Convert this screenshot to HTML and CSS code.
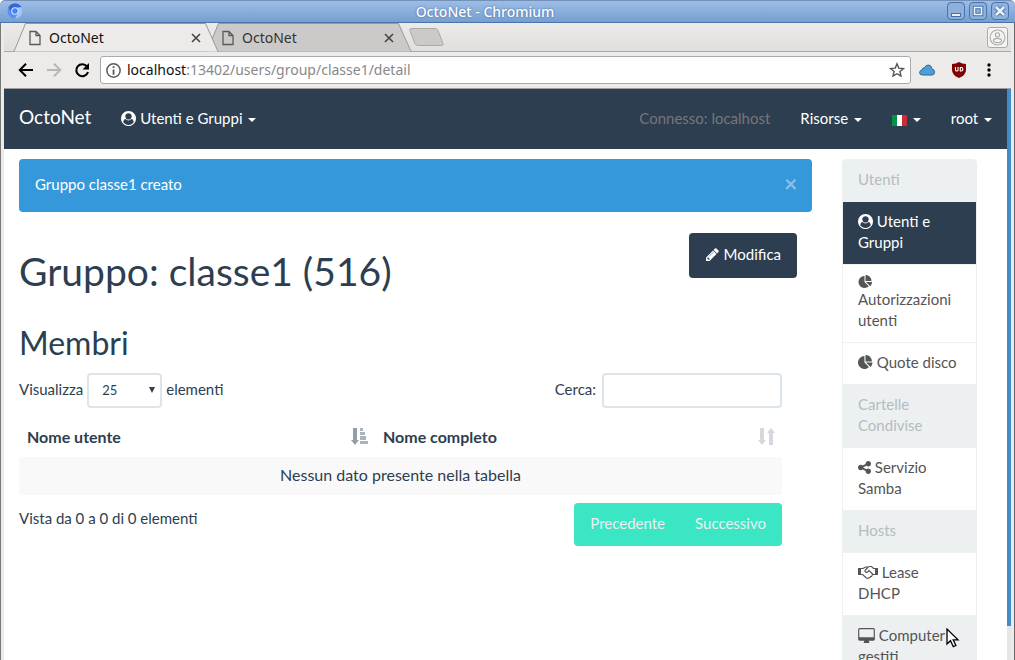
FILE: index.html
```
<!DOCTYPE html>
<html lang="it">
<head>
    <meta charset="UTF-8">
    <meta name="viewport" content="width=device-width, initial-scale=1.0">
    <title>OctoNet</title>
    <link rel="stylesheet" href="styles.css">
</head>
<body>
    <!-- Simboli condivisi -->
    <svg class="symbols" aria-hidden="true">
        <symbol id="user-circle" viewBox="0 0 1792 1792">
            <path d="M1523 1339q-22-155-87.500-257.500t-184.500-118.500q-67 74-159.500 115.500t-195.500 41.500-195.500-41.500-159.500-115.500q-119 16-184.500 118.500t-87.500 257.500q106 150 271 237.500t356 87.500 356-87.500 271-237.500zm-243-699q0-159-112.500-271.500t-271.500-112.500-271.500 112.500-112.500 271.500 112.500 271.500 271.500 112.500 271.500-112.500 112.500-271.500zm512 256q0 182-71 347.500t-190.500 286-285.500 191.500-349 71q-182 0-348-71t-286-191-191-286-71-348 71-348 191-286 286-191 348-71 348 71 286 191 191 286 71 348z"/>
        </symbol>
        <symbol id="pie-chart" viewBox="0 0 1792 1792">
            <path d="M768 890l546 546q-106 108-247.500 168t-298.500 60q-209 0-385.500-103t-279.500-279.500-103-385.500 103-385.500 279.500-279.500 385.500-103v762zm187 6h773q0 157-60 298.500t-168 247.500zm709-128h-768v-768q209 0 385.500 103t279.500 279.500 103 385.500z"/>
        </symbol>
        <symbol id="file" viewBox="0 0 12 16">
            <path d="M1 1.500h6l4 4v9H1zM7 1.500v4h4" fill="none" stroke="#5a5a5a" stroke-width="1.300"/>
        </symbol>
        <symbol id="cross" viewBox="0 0 10 10">
            <path d="M1 1l8 8M9 1L1 9" stroke="#444" stroke-width="1.600"/>
        </symbol>
        <symbol id="tab-shape" viewBox="0 0 206 29">
            <path d="M0 28.500h1L12.500.5h180L205 28.500h1"/>
        </symbol>
    </svg>

    <div class="window">
        <header class="titlebar">
            <svg class="app-icon" viewBox="0 0 16 16">
                <circle cx="8" cy="8" r="7.500" fill="#5b8ff0"/>
                <path d="M1.500 4.300A7.500 7.500 0 0 1 14.500 4.300L8 4.500 4.700 10z" fill="#3367d6"/>
                <path d="M14.500 4.300A7.500 7.500 0 0 1 8 15.500L11.200 9.800 11 4.400z" fill="#a5c3fb"/>
                <circle cx="8" cy="8" r="3.800" fill="#dbe7ff"/>
                <circle cx="8" cy="8" r="2.700" fill="#4483f3"/>
            </svg>
            <span class="window-title">OctoNet - Chromium</span>
            <div class="window-buttons">
                <button aria-label="Riduci"><svg viewBox="0 0 16 16"><rect x="3.500" y="10.500" width="9" height="3" fill="#e9f1fa" stroke="#4671a5"/></svg></button>
                <button aria-label="Ingrandisci"><svg viewBox="0 0 16 16"><path d="M4.500 4.500h7v7h-7z" fill="none" stroke="#4671a5" stroke-width="3.500"/><path d="M4.500 4.500h7v7h-7z" fill="none" stroke="#e9f1fa" stroke-width="1.600"/></svg></button>
                <button aria-label="Chiudi"><svg viewBox="0 0 16 16"><path d="M4 4l8 8M12 4l-8 8" stroke="#4671a5" stroke-width="4.500"/><path d="M4 4l8 8M12 4l-8 8" stroke="#e9f1fa" stroke-width="2.500"/></svg></button>
            </div>
        </header>

        <div class="frame">
            <div class="tabstrip">
                <div class="tab active">
                    <svg class="tab-bg"><use href="#tab-shape"/></svg>
                    <svg class="tab-file"><use href="#file"/></svg>
                    <span>OctoNet</span>
                    <button class="tab-close" aria-label="Chiudi scheda"><svg><use href="#cross"/></svg></button>
                </div>
                <div class="tab">
                    <svg class="tab-bg"><use href="#tab-shape"/></svg>
                    <svg class="tab-file"><use href="#file"/></svg>
                    <span>OctoNet</span>
                    <button class="tab-close" aria-label="Chiudi scheda"><svg><use href="#cross"/></svg></button>
                </div>
                <button class="new-tab" aria-label="Nuova scheda">
                    <svg viewBox="0 0 35 18"><path d="M2.500.5H26q2 0 3 2l5 13q.5 2-1.500 2H9q-2 0-3-2L.8 2.500Q.3.5 2.500.5z" fill="#cccac8" stroke="#aaa8a5"/></svg>
                </button>
                <button class="profile" aria-label="Profilo">
                    <svg viewBox="0 0 16 16" fill="none" stroke="#aaa"><circle cx="8" cy="8" r="7"/><circle cx="8" cy="5.500" r="2"/><ellipse cx="8" cy="10.800" rx="3.800" ry="2"/></svg>
                </button>
            </div>

            <div class="toolbar">
                <button aria-label="Indietro"><svg viewBox="0 0 16 16" fill="none" stroke="#000" stroke-width="2"><path d="M15 8H2M8 1.800L1.800 8 8 14.200"/></svg></button>
                <button aria-label="Avanti"><svg viewBox="0 0 16 16" fill="none" stroke="#b8b7b5" stroke-width="2"><path d="M1 8h13M8 1.800L14.200 8 8 14.200"/></svg></button>
                <button aria-label="Ricarica"><svg viewBox="0 0 16 16"><path d="M13 4.500A6 6 0 1 0 14 10" fill="none" stroke="#000" stroke-width="2.100"/><path d="M15 1v6.500H8.500z"/></svg></button>
                <div class="omnibox">
                    <svg class="info" viewBox="0 0 14 14"><circle cx="7" cy="7" r="6.200" fill="none" stroke="#5a5a5a" stroke-width="1.400"/><path d="M6.200 3h1.700v1.700H6.200zM6.200 6h1.700v5H6.200z" fill="#5a5a5a"/></svg>
                    <div class="url" role="textbox" aria-label="Indirizzo" contenteditable="true" spellcheck="false"><b>localhost</b>:13402/users/group/classe1/detail</div>
                    <svg class="star" viewBox="0 0 16 16"><path d="M8 1.800l1.800 4.300 4.700.4-3.600 3 1.100 4.600L8 11.700l-4 2.400 1.100-4.600-3.600-3 4.700-.4z" fill="none" stroke="#555" stroke-width="1.400"/></svg>
                </div>
                <button class="ext" aria-label="Cloud"><svg viewBox="0 0 16 16"><path d="M3.500 13Q.6 13 .6 10.500.6 8.500 3 8q.3-2.300 2.500-2.300Q6.800 3 9.300 3q3 0 3.500 3.600 2.700.8 2.700 3.500Q15.500 13 13 13z" fill="#4a9fdc" stroke="#3c6380"/></svg></button>
                <button class="ext" aria-label="uBlock">
                    <svg viewBox="0 0 16 16"><path d="M8 0q3 2 7 2v6q0 5-7 8-7-3-7-8V2q4 0 7-2z" fill="#800000"/><path d="M4.500 5v2.700q0 1.300 1.300 1.300t1.300-1.300V5M9.300 5.500h.9q1.700 0 1.700 1.700T10.200 9h-.9z" fill="none" stroke="#fff" stroke-width="1.100"/></svg>
                </button>
                <button class="menu" aria-label="Menu"><svg viewBox="0 0 4 16"><circle cx="2" cy="3" r="1.700"/><circle cx="2" cy="8" r="1.700"/><circle cx="2" cy="13" r="1.700"/></svg></button>
            </div>

            <div class="viewport">
                <div class="page">
                    <nav class="navbar">
                        <a class="brand" href="#">OctoNet</a>
                        <a href="#"><svg class="icon"><use href="#user-circle"/></svg> Utenti e Gruppi <i class="caret"></i></a>
                        <span class="connected">Connesso: localhost</span>
                        <a href="#">Risorse <i class="caret"></i></a>
                        <a href="#" aria-label="Lingua"><i class="flag"></i> <i class="caret"></i></a>
                        <a href="#">root <i class="caret"></i></a>
                    </nav>

                    <div class="container">
                        <main>
                            <div class="alert">
                                <span>Gruppo classe1 creato</span>
                                <button aria-label="Chiudi">×</button>
                            </div>
                            <div class="page-header">
                                <h1>Gruppo: classe1 (516)</h1>
                                <button class="btn">
                                    <svg class="pencil" viewBox="0 0 1792 1792"><path d="M491 1536l91-91-235-235-91 91v107h128v128h107zm523-928q0-22-22-22-10 0-17 7l-542 542q-7 7-7 17 0 22 22 22 10 0 17-7l542-542q7-7 7-17zm-54-192l416 416-832 832h-416v-416zm683 96q0 53-37 90l-166 166-416-416 166-165q36-38 90-38 53 0 91 38l235 234q37 39 37 91z"/></svg>
                                    Modifica
                                </button>
                            </div>

                            <section class="members">
                                <h2>Membri</h2>
                                <div class="controls">
                                    <label class="length"><span>Visualizza</span>
                                        <span class="select-box"><select><option>10</option><option selected>25</option><option>50</option></select></span>
                                        <span>elementi</span>
                                    </label>
                                    <label class="search"><span>Cerca:</span> <input type="search"></label>
                                </div>
                                <table>
                                    <thead>
                                        <tr>
                                            <th>
                                                <div>Nome utente
                                                    <svg class="sort" viewBox="0 0 17 17"><path d="M2 0h4v12h2l-4 5-4-5h2z" opacity=".5"/><path d="M9 0h3v3H9zM9 4h5v3H9zM9 8h6v4H9zM9 13h8v3H9z" opacity=".4"/></svg>
                                                </div>
                                            </th>
                                            <th>
                                                <div>Nome completo
                                                    <svg class="sort" viewBox="0 0 17 17"><path d="M2 0h4v12h2l-4 5-4-5h2zM11 17h4V5h2l-4-5-4 5h2z" opacity=".2"/></svg>
                                                </div>
                                            </th>
                                        </tr>
                                    </thead>
                                    <tbody>
                                        <tr><td colspan="2">Nessun dato presente nella tabella</td></tr>
                                    </tbody>
                                </table>
                                <div class="table-footer">
                                    <span>Vista da 0 a 0 di 0 elementi</span>
                                    <div class="pagination">
                                        <a href="#">Precedente</a>
                                        <a href="#">Successivo</a>
                                    </div>
                                </div>
                            </section>
                        </main>

                        <aside class="sidebar">
                            <div class="heading">Utenti</div>
                            <a class="active" href="#"><svg class="icon"><use href="#user-circle"/></svg> Utenti e Gruppi</a>
                            <a href="#"><svg class="icon stacked"><use href="#pie-chart"/></svg>Autorizzazioni utenti</a>
                            <a href="#"><svg class="icon"><use href="#pie-chart"/></svg> Quote disco</a>
                            <div class="heading">Cartelle Condivise</div>
                            <a href="#"><svg class="icon share" viewBox="128 128 1536 1536"><path d="M1344 1024q133 0 226.500 93.500t93.500 226.500-93.500 226.500-226.500 93.500-226.500-93.500-93.500-226.500q0-12 2-34l-360-180q-92 86-218 86-133 0-226.500-93.500t-93.500-226.500 93.500-226.500 226.500-93.500q126 0 218 86l360-180q-2-22-2-34 0-133 93.500-226.500t226.500-93.500 226.500 93.500 93.500 226.500-93.500 226.500-226.500 93.500q-126 0-218-86l-360 180q2 22 2 34t-2 34l360 180q92-86 218-86z"/></svg> Servizio Samba</a>
                            <div class="heading">Hosts</div>
                            <a href="#"><svg class="icon wide" viewBox="0 0 20 15">
                                <path d="M0 3h3v7H0zM17 3h3v7h-3z"/>
                                <path d="M3 3.500h2L7.500 2H10l1.500-.5h2l2 2H17M3 9.500h1.500l4 3.500q1.200.8 2-.2 1.600.3 2-1.100 1.500 0 1.700-1.700l.8-.5h2M10.200 2L7 5.500q0 2 1.600 1.800 1.600-.3 2.400-1.800l4 4" fill="none" stroke="#555" stroke-width="1.200"/>
                            </svg> Lease DHCP</a>
                            <a class="hover" href="#"><svg class="icon desktop" viewBox="0 0 1856 1664"><path d="M1728 992v-832q0-13-9.500-22.500t-22.500-9.500h-1536q-13 0-22.500 9.500t-9.500 22.500v832q0 13 9.500 22.500t22.500 9.500h1536q13 0 22.500-9.500t9.500-22.500zm128-832v1088q0 66-47 113t-113 47h-512q0 37 16 77.500t32 71 16 43.500q0 26-19 45t-45 19h-512q-26 0-45-19t-19-45q0-14 16-44t32-70 16-78h-512q-66 0-113-47t-47-113v-1088q0-66 47-113t113-47h1536q66 0 113 47t47 113z"/></svg> Computer gestiti</a>
                        </aside>
                    </div>
                </div>
                <div class="scrollbar"><div class="thumb"></div></div>
            </div>
        </div>
    </div>

    <svg class="pointer" viewBox="0 0 14 20"><path d="M1 1v15l3.500-3.300 2.800 6 2.600-1.200-2.700-5.700H12z" fill="#fff" stroke="#000" stroke-width="1.300"/></svg>
</body>
</html>
```
FILE: styles.css
```
* {
    box-sizing: border-box;
}
body {
    margin: 0;
    font-family: Lato, sans-serif;
    font-size: 15px;
    line-height: 21px;
    color: #2c3e50;
    background-color: #fff;
}
button {
    font: inherit;
    border: none;
    padding: 0;
    background: none;
    cursor: pointer;
}
a {
    text-decoration: none;
}
svg {
    display: block;
}
.symbols {
    position: absolute;
    width: 0;
    height: 0;
}

/* Finestra */
.window {
    display: flex;
    flex-direction: column;
    height: 100vh;
    overflow: hidden;
}
.titlebar {
    display: flex;
    align-items: center;
    flex: none;
    height: 23px;
    padding: 0 6px 1px 7px;
    background: linear-gradient(#9dbde6, #769fd0);
    border-top: 1px solid #7391b8;
    border-bottom: 1px solid #4a73ab;
    border-radius: 5px 5px 0 0;
}
.app-icon {
    width: 16px;
    height: 16px;
}
.window-title {
    flex: 1;
    text-align: center;
    font-family: "Noto Sans", sans-serif;
    font-size: 14px;
    font-weight: 500;
    color: #fff;
    text-shadow: 0 0 2px #36609a;
}
.window-buttons {
    display: flex;
    gap: 4px;
}
.window-buttons button {
    width: 18px;
    height: 18px;
    border: 1px solid #4a73ab;
    border-radius: 4px;
    background-color: #8db0dd;
}
.frame {
    display: flex;
    flex-direction: column;
    flex: 1;
    min-height: 0;
    border-left: 1px solid #777;
    border-right: 1px solid #666;
    padding: 0 3px;
    background-color: #edebea;
    font-family: "Noto Sans", sans-serif;
}

/* Schede */
.tabstrip {
    display: flex;
    flex: none;
    height: 29px;
    padding-left: 9px;
    background: linear-gradient(#edebea, #e0dfdd);
    border-bottom: 1px solid #aaa8a6;
}
.tab {
    position: relative;
    display: flex;
    align-items: center;
    isolation: isolate;
    width: 206px;
    height: 29px;
    margin-right: -13px;
    padding: 0 18px 0 16px;
    font-size: 14px;
    color: #333;
}
.tab.active {
    z-index: 1;
    color: #111;
}
.tab-bg {
    position: absolute;
    left: 0;
    top: 0;
    z-index: -1;
    width: 206px;
    height: 29px;
    fill: #cccac8;
    stroke: #999;
}
.active .tab-bg {
    fill: #edebea;
}
.tab-file {
    width: 12px;
    height: 16px;
}
.tab span {
    flex: 1;
    margin-left: 8px;
}
.tab-close svg {
    width: 10px;
    height: 10px;
}
.new-tab {
    margin-left: 10px;
}
.new-tab svg {
    width: 35px;
    height: 18px;
}
.profile {
    width: 21px;
    height: 21px;
    margin: 4px 3px 0 auto;
    padding: 1px;
    border: 1px solid #aaa;
    border-radius: 3px;
    background-color: #f5f4f3;
}

/* Barra degli strumenti */
.toolbar {
    display: flex;
    align-items: center;
    flex: none;
    height: 37px;
    padding: 0 20px 0 14px;
    border-bottom: 1px solid #a09e9c;
}
.toolbar button svg {
    width: 16px;
    height: 16px;
}
.toolbar > button {
    margin-right: 12px;
}
.omnibox {
    display: flex;
    align-items: center;
    flex: 1;
    height: 28px;
    margin-right: 8px;
    margin-left: -2px;
    padding: 0 5px;
    background-color: #fff;
    border: 1px solid #aaa;
    border-radius: 3px;
}
.info {
    width: 15px;
    height: 15px;
}
.url {
    flex: 1;
    margin-left: 6px;
    padding-bottom: 2px;
    font-size: 14px;
    color: #888;
    outline: none;
}
.url b {
    font-weight: normal;
    color: #111;
}
.star {
    width: 16px;
    height: 16px;
}
.toolbar .ext {
    margin-right: 16px;
}
.toolbar .menu {
    width: 4px;
    margin: 0 0 0 4px;
}
.toolbar .menu svg {
    width: 4px;
}

/* Pagina */
.viewport {
    display: flex;
    flex: 1;
    min-height: 0;
    font-family: Lato, sans-serif;
    background-color: #fff;
}
.page {
    flex: 1;
    min-width: 0;
    overflow: hidden;
}
.scrollbar {
    width: 4px;
    background-color: #e6e6e6;
}
.thumb {
    height: 94%;
    background-color: #428bca;
}
.navbar {
    display: flex;
    align-items: center;
    height: 60px;
    padding-bottom: 2px;
    background-color: #2c3e50;
}
.navbar a, .connected {
    padding: 0 15px;
    color: #fff;
    white-space: nowrap;
}
.navbar .brand {
    padding-bottom: 4px;
    font-size: 19px;
}
.navbar .connected {
    margin-left: auto;
    color: #777;
}
.icon {
    display: inline-block;
    width: 15px;
    height: 15px;
    vertical-align: -2px;
    fill: currentColor;
}
.caret {
    display: inline-block;
    margin-left: 2px;
    vertical-align: middle;
    border-top: 4px solid;
    border-left: 4px solid transparent;
    border-right: 4px solid transparent;
}
.flag {
    display: inline-block;
    width: 15px;
    height: 11px;
    vertical-align: -2px;
    background: linear-gradient(90deg, #009246 33%, #fff 33%, #fff 67%, #ce2b37 67%);
}
.container {
    display: grid;
    grid-template-columns: 1fr 135px;
    align-items: start;
    gap: 30px;
    padding: 10px 30px 0 15px;
}
.alert {
    display: flex;
    justify-content: space-between;
    align-items: flex-start;
    padding: 15px 15px 17px 16px;
    margin-bottom: 21px;
    border-radius: 4px;
    color: #fff;
    background-color: #3498db;
}
.alert button {
    width: 13px;
    font-size: 23px;
    font-weight: bold;
    line-height: 18px;
    color: #fff;
    opacity: 0.4;
}
.page-header {
    display: flex;
    justify-content: space-between;
    align-items: flex-start;
    padding-right: 15px;
}
h1, h2 {
    margin: 0;
    font-weight: normal;
}
h1 {
    margin: 17px 0 31px;
    font-size: 39px;
    line-height: 43px;
}
h2 {
    margin-bottom: 12px;
    font-size: 32px;
    line-height: 37px;
}
.btn {
    display: flex;
    align-items: center;
    gap: 4px;
    height: 45px;
    padding: 0 16px 2px;
    border-radius: 4px;
    color: #fff;
    background-color: #2c3e50;
}
.pencil {
    width: 15px;
    height: 15px;
    fill: currentColor;
}
.members {
    padding-right: 30px;
}
.controls {
    display: flex;
    justify-content: space-between;
    margin-bottom: 10px;
}
.length, .search {
    display: flex;
    align-items: center;
    gap: 4px;
}
.search {
    gap: 6px;
}
.controls label > span:not(.select-box) {
    padding-bottom: 2px;
}
.select-box {
    position: relative;
}
.select-box::after {
    content: "";
    position: absolute;
    right: 7px;
    top: 14px;
    border-top: 6px solid #2c3e50;
    border-left: 3px solid transparent;
    border-right: 3px solid transparent;
}
select, .search input {
    display: block;
    height: 35px;
    border: 2px solid #dce4ec;
    border-radius: 4px;
    background-color: #fff;
    font-family: inherit;
    font-size: 13px;
    color: inherit;
    appearance: none;
}
select {
    width: 75px;
    padding: 0 13px 2px;
}
.search input {
    width: 180px;
    padding: 0 9px;
}
table {
    width: 100%;
    border-collapse: collapse;
    font-size: 16px;
}
th {
    padding: 8px 7px 10px 8px;
    text-align: left;
}
th:first-child {
    width: 356px;
}
th div {
    display: flex;
    justify-content: space-between;
    align-items: center;
}
.sort {
    width: 17px;
    height: 17px;
    fill: #2c3e50;
}
td {
    height: 38px;
    padding: 6px 8px 10px;
    text-align: center;
    background-color: #f9f9f9;
}
.table-footer {
    display: flex;
    justify-content: space-between;
    align-items: flex-start;
    padding-top: 8px;
}
.table-footer span {
    margin-top: 5px;
}
.pagination {
    display: flex;
    padding: 0 1px;
    border-radius: 4px;
    background-color: #3be6c4;
}
.pagination a {
    padding: 10px 15px 12px;
    color: #ecf0f1;
}

/* Menu laterale */
.sidebar > * {
    display: block;
    margin-bottom: -1px;
    padding: 9px 15px 11px;
    border: 1px solid #ecf0f1;
    color: #555;
}
.sidebar .heading {
    color: #b4bcc2;
    background-color: #ecf0f1;
}
.sidebar .heading:first-child {
    border-radius: 4px 4px 0 0;
}
.sidebar .active {
    color: #fff;
    background-color: #2c3e50;
}
.sidebar .hover {
    background-color: #ecf0f1;
}
.sidebar .stacked {
    display: block;
    margin-top: 1px;
    height: 14px;
}
.sidebar .share {
    width: 13px;
    height: 13px;
    vertical-align: -1px;
}
.sidebar .wide {
    width: 20px;
}
.sidebar .desktop {
    width: 17px;
}

/* Puntatore del mouse */
.pointer {
    position: absolute;
    left: 946px;
    top: 628px;
    width: 14px;
    height: 20px;
}
```
